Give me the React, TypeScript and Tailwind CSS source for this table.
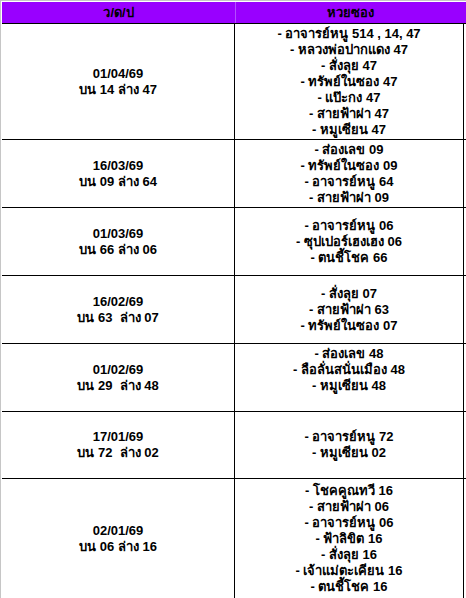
import React from "react";

type Row = {
  date: string;
  result: string;
  tips: string[];
  height: string;
  topAligned?: boolean;
};

const rows: Row[] = [
  {
    date: "01/04/69",
    result: "บน 14 ล่าง 47",
    tips: [
      "- อาจารย์หนู 514 , 14, 47",
      "- หลวงพ่อปากแดง 47",
      "- สั่งลุย 47",
      "- ทรัพย์ในซอง 47",
      "- แป๊ะกง 47",
      "- สายฟ้าผ่า 47",
      "- หมูเซียน 47",
    ],
    height: "h-[116px]",
  },
  {
    date: "16/03/69",
    result: "บน 09 ล่าง 64",
    tips: ["- ส่องเลข 09", "- ทรัพย์ในซอง 09", "- อาจารย์หนู 64", "- สายฟ้าผ่า 09"],
    height: "h-[68px]",
  },
  {
    date: "01/03/69",
    result: "บน 66 ล่าง 06",
    tips: ["- อาจารย์หนู 06", "- ซุปเปอร์เฮงเฮง 06", "- ตนชี้โชค 66"],
    height: "h-[68px]",
  },
  {
    date: "16/02/69",
    result: "บน 63  ล่าง 07",
    tips: ["- สั่งลุย 07", "- สายฟ้าผ่า 63", "- ทรัพย์ในซอง 07"],
    height: "h-[68px]",
  },
  {
    date: "01/02/69",
    result: "บน 29  ล่าง 48",
    tips: ["- ส่องเลข 48", "- ลือลั่นสนั่นเมือง 48", "- หมูเซียน 48"],
    height: "h-[68px]",
    topAligned: true,
  },
  {
    date: "17/01/69",
    result: "บน 72  ล่าง 02",
    tips: ["- อาจารย์หนู 72", "- หมูเซียน 02"],
    height: "h-[67px]",
  },
  {
    date: "02/01/69",
    result: "บน 06 ล่าง 16",
    tips: [
      "- โชคคูณทวี 16",
      "- สายฟ้าผ่า 06",
      "- อาจารย์หนู 06",
      "- ฟ้าลิขิต 16",
      "- สั่งลุย 16",
      "- เจ้าแม่ตะเคียน 16",
      "- ตนชี้โชค 16",
    ],
    height: "h-[120px]",
  },
];

export default function App() {
  return (
    <div
      className="min-h-[598px] w-[466px] overflow-hidden border-t border-l border-[#c6c6c6] bg-white pl-px pt-px text-[13px] font-bold leading-[16px] text-black"
      style={{ fontFamily: '"Liberation Sans", Tahoma, "Noto Sans", sans-serif' }}
    >
      <div className="grid grid-cols-[233px_1px_229px_1px] border-b border-black bg-[#9900ff]">
        <div className="flex h-[21px] items-center justify-center">ว/ด/ป</div>
        <div className="bg-[#b44dff]" />
        <div className="flex h-[21px] items-center justify-center">หวยซอง</div>
        <div />
      </div>
      {rows.map((row) => (
        <div
          key={row.date}
          className={`grid grid-cols-[233px_229px] border-b border-black ${row.height}`}
        >
          <div className="flex flex-col items-center justify-center border-r border-black whitespace-pre">
            <span>{row.date}</span>
            <span>{row.result}</span>
          </div>
          <div
            className={`flex flex-col items-center border-r border-black ${
              row.topAligned ? "justify-start pt-[2px]" : "justify-center"
            }`}
          >
            {row.tips.map((tip) => (
              <span key={tip} className="whitespace-pre">
                {tip}
              </span>
            ))}
          </div>
        </div>
      ))}
    </div>
  );
}
